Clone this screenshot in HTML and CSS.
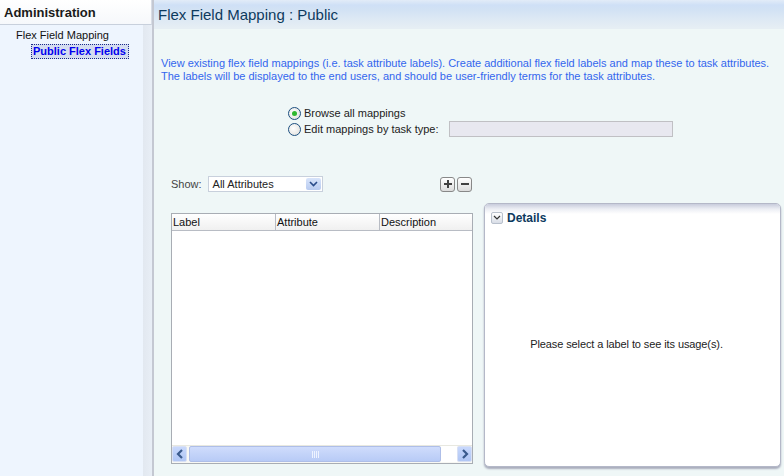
FILE: index.html
```html
<!DOCTYPE html>
<html>
<head>
<meta charset="utf-8">
<link rel="stylesheet" href="styles.css">
</head>
<body>
<aside class="sidebar">
  <div class="side-head">Administration</div>
  <div class="side-body">
    <div class="tree-item">Flex Field Mapping</div>
    <div class="tree-sub"><span class="tree-sel">Public Flex Fields</span></div>
  </div>
</aside>
<main class="main">
  <header class="main-head"><h1>Flex Field Mapping : Public</h1></header>
  <p class="desc">View existing flex field mappings (i.e. task attribute labels). Create additional flex field labels and map these to task attributes.<br>The labels will be displayed to the end users, and should be user-friendly terms for the task attributes.</p>
  <div class="radios">
    <label class="radio-row"><span class="radio checked"></span>Browse all mappings</label>
    <label class="radio-row"><span class="radio"></span>Edit mappings by task type:<span class="task-input"></span></label>
  </div>
  <div class="lower">
    <div class="left-col">
      <div class="toolbar">
        <span class="show-label">Show:</span>
        <span class="select">All Attributes<span class="sel-btn"><svg width="9" height="6" viewBox="0 0 9 6"><path d="M1 1 L4.5 4.5 L8 1" fill="none" stroke="#2a4c8a" stroke-width="1.6"/></svg></span></span>
        <span class="spacer"></span>
        <span class="icon-btn"><svg width="10" height="10" viewBox="0 0 10 10"><path d="M5 1 V9 M1 5 H9" stroke="#404040" stroke-width="2"/></svg></span>
        <span class="icon-btn"><svg width="10" height="10" viewBox="0 0 10 10"><path d="M1 5 H9" stroke="#404040" stroke-width="2"/></svg></span>
      </div>
      <div class="table">
        <div class="thead">
          <div class="th w1">Label</div>
          <div class="th w2">Attribute</div>
          <div class="th w3">Description</div>
        </div>
        <div class="tbody"></div>
        <div class="hscroll">
          <span class="sb-btn"><svg width="8" height="10" viewBox="0 0 8 10"><path d="M6 1 L2 5 L6 9" fill="none" stroke="#3a5a8c" stroke-width="2.2"/></svg></span>
          <span class="sb-thumb"><span class="grip"></span></span>
          <span class="sb-track"></span>
          <span class="sb-btn"><svg width="8" height="10" viewBox="0 0 8 10"><path d="M2 1 L6 5 L2 9" fill="none" stroke="#3a5a8c" stroke-width="2.2"/></svg></span>
        </div>
      </div>
    </div>
    <section class="details">
      <div class="det-head">
        <span class="collapse"><svg width="8" height="5" viewBox="0 0 8 5"><path d="M1 1 L4 4 L7 1" fill="none" stroke="#333" stroke-width="1.2"/></svg></span>
        <span class="det-title">Details</span>
      </div>
      <div class="det-body">Please select a label to see its usage(s).</div>
    </section>
  </div>
</main>
</body>
</html>
```

FILE: styles.css
```css
* { box-sizing: border-box; }
html, body { margin: 0; padding: 0; }
body {
  width: 784px;
  height: 476px;
  overflow: hidden;
  display: flex;
  font-family: "Liberation Sans", Arial, sans-serif;
  font-size: 11px;
  color: #222;
  background: #eff7f7;
}
.sidebar {
  width: 154px;
  flex: none;
  background: #eef5fe;
  border-right: 2px solid #c4c8d2;
  display: flex;
  flex-direction: column;
}
.side-head {
  height: 25px;
  padding: 5px 0 0 4px;
  font-size: 13px;
  font-weight: bold;
  color: #1a1a1a;
  background: linear-gradient(#ffffff, #f6f8fb);
  border-bottom: 1px solid #c8d0dc;
  border-right: 1px solid #d8dde6;
}
.side-body {
  flex: 1;
  padding-top: 3px;
  background: linear-gradient(90deg, #eef5fe 0, #eef5fe 143px, #e2e8f0 143px, #e8eef6 152px);
}
.tree-item { padding-left: 16px; height: 14px; line-height: 14px; color: #111; }
.tree-sub { padding-left: 31px; height: 15px; margin-top: 2px; }
.tree-sel {
  display: inline-block;
  height: 15px;
  line-height: 13px;
  padding: 0 2px 0 1px;
  font-weight: bold;
  color: #0000ee;
  background: #d4dcf0;
  border: 1px dotted #1a2a8a;
}
.main {
  flex: 1;
  display: flex;
  flex-direction: column;
  min-width: 0;
}
.main-head {
  height: 29px;
  padding-left: 4px;
  background: linear-gradient(#e2ecf8 0, #cfe0f6 5px, #d2e2f4 10px, #dce8f4 18px, #e6eef4 28px);
  display: flex;
  align-items: center;
}
.main-head h1 {
  margin: 0;
  font-size: 15px;
  font-weight: normal;
  color: #0d3a5e;
}
.desc {
  margin: 28px 0 0 7px;
  line-height: 13px;
  color: #3366ee;
}
.radios {
  margin: 22px 0 0 134px;
  display: flex;
  flex-direction: column;
}
.radio-row {
  display: flex;
  align-items: center;
  height: 16px;
  color: #222;
}
.radio {
  width: 13px;
  height: 13px;
  border-radius: 50%;
  border: 1px solid #1c4f80;
  background: radial-gradient(circle at 40% 40%, #ffffff, #dcdcd8);
  margin-right: 3px;
  position: relative;
}
.radio.checked::after {
  content: "";
  position: absolute;
  left: 3px;
  top: 3px;
  width: 5px;
  height: 5px;
  border-radius: 50%;
  background: #2fb82f;
}
.task-input {
  display: inline-block;
  width: 224px;
  height: 16px;
  margin-left: 10px;
  background: #e8e8f0;
  border: 1px solid #c0c0c4;
}
.lower {
  margin: 39px 0 0 17px;
  display: flex;
  align-items: flex-start;
  gap: 11px;
}
.left-col { width: 302px; display: flex; flex-direction: column; }
.toolbar {
  display: flex;
  align-items: center;
  height: 16px;
}
.show-label { color: #444; margin-right: 6px; }
.select {
  width: 115px;
  height: 16px;
  background: #fff;
  border: 1px solid #c8d0dc;
  display: flex;
  align-items: center;
  justify-content: space-between;
  padding-left: 4px;
  color: #222;
}
.sel-btn {
  width: 15px;
  height: 12px;
  margin-right: 1px;
  background: linear-gradient(#d8e4fa, #b8cbf0);
  border-radius: 2px;
  display: flex;
  align-items: center;
  justify-content: center;
}
.spacer { flex: 1; }
.icon-btn {
  width: 15px;
  height: 15px;
  margin-left: 2px;
  border: 1px solid #888;
  border-radius: 3px;
  background: linear-gradient(#ffffff, #dcdcdc);
  display: flex;
  align-items: center;
  justify-content: center;
}
.icon-btn:last-child { margin-right: 1px; }
.table {
  margin-top: 21px;
  height: 251px;
  background: #fff;
  border: 1px solid #a8adb4;
  display: flex;
  flex-direction: column;
}
.thead {
  display: flex;
  height: 17px;
  background: linear-gradient(#ffffff, #f0f0f0);
  border-bottom: 1px solid #b8bcc4;
}
.th {
  padding-left: 1px;
  line-height: 16px;
  color: #111;
  border-right: 1px solid #b8bcc4;
}
.w1 { width: 104px; }
.w2 { width: 104px; }
.w3 { flex: 1; border-right: none; }
.tbody { flex: 1; }
.hscroll {
  height: 18px;
  display: flex;
  align-items: center;
  padding: 0 0 1px 0;
  background: #f8f8f4;
  border-top: 1px solid #e8e8e0;
}
.sb-btn {
  width: 15px;
  height: 16px;
  background: linear-gradient(#c8d8fc, #b0c6f4);
  border: 1px solid #d8e0f4;
  border-radius: 2px;
  display: flex;
  align-items: center;
  justify-content: center;
}
.sb-thumb {
  width: 252px;
  height: 16px;
  margin-left: 2px;
  background: linear-gradient(#cfdcfc, #b8cbf6);
  border: 1px solid #aebee8;
  border-radius: 2px;
  display: flex;
  align-items: center;
  justify-content: center;
}
.grip {
  width: 7px;
  height: 7px;
  background: repeating-linear-gradient(90deg, #eef3ff 0, #eef3ff 1px, transparent 1px, transparent 2px);
}
.sb-track { flex: 1; background: #fff; height: 16px; }
.details {
  width: 297px;
  height: 264px;
  margin-top: 27px;
  background: #fff;
  border: 1px solid #b4b8c8;
  border-radius: 5px;
  box-shadow: 0 2px 2px #a8acbc;
  display: flex;
  flex-direction: column;
  overflow: hidden;
}
.det-head {
  height: 22px;
  padding: 5px 0 0 6px;
  display: flex;
  align-items: center;
  background: linear-gradient(#c8ccdc 0, #eceef4 5px, #ffffff 10px);
}
.collapse {
  width: 12px;
  height: 12px;
  border: 1px solid #b8c0cc;
  border-radius: 2px;
  background: linear-gradient(#ffffff, #d8dde6);
  display: flex;
  align-items: center;
  justify-content: center;
  margin-right: 4px;
}
.det-title {
  font-size: 12px;
  font-weight: bold;
  color: #0d3a5e;
}
.det-body {
  flex: 1;
  display: flex;
  align-items: center;
  justify-content: center;
  padding-bottom: 4px;
  padding-right: 12px;
  letter-spacing: -0.1px;
  color: #222;
}
```
